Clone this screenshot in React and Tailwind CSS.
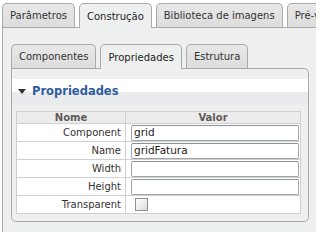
import React from "react";

function Tab({ label, selected }) {
  return (
    <div
      className={
        "px-[7px] flex items-center rounded-t-[5px] border border-b-0 border-[#a9a9a9] whitespace-nowrap " +
        (selected
          ? "bg-[#eef0f0] text-[#222] h-[25px] -mb-px relative z-10"
          : "h-[24px] bg-gradient-to-b from-[#e8e8e8] to-[#dcdcdc] text-[#333]")
      }
    >
      {label}
    </div>
  );
}

function InputCell({ value }) {
  return (
    <div className="h-[16px] border border-[#9fa4a8] border-t-[#8a8f93] rounded-[2px] bg-white flex items-center px-[2px] text-[10.5px] text-[#222] leading-none">
      {value}
    </div>
  );
}

const rows = [
  { name: "Component", value: "grid" },
  { name: "Name", value: "gridFatura" },
  { name: "Width", value: "" },
  { name: "Height", value: "" },
];

export default function App() {
  return (
    <div className="w-[316px] h-[232px] bg-white overflow-hidden font-['DejaVu_Sans',sans-serif] text-[10px]">
      {/* outer tabs */}
      <div className="flex items-end gap-[4px] pl-[2px] pt-[3px]">
        <Tab label="Parâmetros" />
        <Tab label="Construção" selected />
        <Tab label="Biblioteca de imagens" />
        <Tab label="Pré-visualização" />
      </div>
      {/* outer panel */}
      <div className="ml-[2px] w-[330px] h-[220px] border border-[#a9a9a9] bg-[#eef0f0] pl-[8px] pt-[16px]">
        <div className="flex items-end gap-[4px]">
          <Tab label="Componentes" />
          <Tab label="Propriedades" selected />
          <Tab label="Estrutura" />
        </div>
        <div className="w-[298px] h-[154px] border border-[#a9a9a9] rounded-tr-[5px] rounded-b-[5px] bg-[#eef0f0] pt-[10px]">
          <div className="h-[26px] bg-[linear-gradient(to_bottom,#ffffff_0%,#ffffff_48%,#e9ebec_52%,#e9ebec_100%)] flex items-center pl-[6px] gap-[6px]">
            <svg width="8" height="6" viewBox="0 0 8 6">
              <path d="M0 0 L8 0 L4 5 Z" fill="#333" />
            </svg>
            <span className="font-bold text-[11.5px] text-[#2c5c9e]">Propriedades</span>
          </div>
          <div className="pl-[4px] pt-[6px]">
            <table className="w-[285px] border-collapse bg-white">
              <thead>
                <tr className="bg-[#ececec] h-[12px]">
                  <th className="w-[109px] border border-[#cfcfcf] font-bold text-[#5f5b57] text-[10px] leading-[10px] p-0">Nome</th>
                  <th className="border border-[#cfcfcf] font-bold text-[#5f5b57] text-[10px] leading-[10px] p-0">Valor</th>
                </tr>
              </thead>
              <tbody>
                {rows.map((r) => (
                  <tr key={r.name} className="h-[18px]">
                    <td className="border border-[#cfcfcf] text-right pr-[4px] text-[#333] p-0">{r.name}</td>
                    <td className="border border-[#cfcfcf] pl-[5px] pr-[1px] py-0">
                      <InputCell value={r.value} />
                    </td>
                  </tr>
                ))}
                <tr className="h-[18px]">
                  <td className="border border-[#cfcfcf] text-right pr-[4px] text-[#333] p-0">Transparent</td>
                  <td className="border border-[#cfcfcf] pl-[9px] py-0">
                    <div className="w-[13px] h-[13px] border border-[#8f8f8f] bg-gradient-to-br from-[#ffffff] to-[#dcdcdc]" />
                  </td>
                </tr>
              </tbody>
            </table>
          </div>
        </div>
      </div>
    </div>
  );
}
